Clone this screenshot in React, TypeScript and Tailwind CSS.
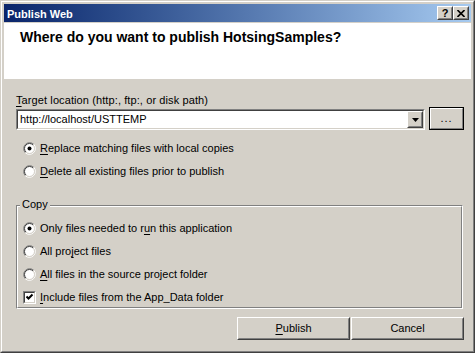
import type { ReactNode } from "react";

const raisedOuter =
  "border border-t-white border-l-white border-r-[#404040] border-b-[#404040]";
const raisedInner =
  "border border-t-[#d4d0c8] border-l-[#d4d0c8] border-r-[#808080] border-b-[#808080]";
const sunkenOuter =
  "border border-t-[#808080] border-l-[#808080] border-r-white border-b-white";
const sunkenInner =
  "border border-t-[#404040] border-l-[#404040] border-r-[#d4d0c8] border-b-[#d4d0c8]";

function Raised({
  children,
  className = "",
}: {
  children?: ReactNode;
  className?: string;
}) {
  return (
    <div className={`${raisedOuter} bg-[#d4d0c8] ${className}`}>
      <div
        className={`${raisedInner} h-full w-full flex items-center justify-center`}
      >
        {children}
      </div>
    </div>
  );
}

function Radio({ checked }: { checked?: boolean }) {
  return (
    <svg width="13" height="13" viewBox="0 0 13 13" className="shrink-0">
      <circle cx="6.5" cy="6.5" r="5" fill="white" />
      <path
        d="M2.26 10.74 A6 6 0 0 1 10.74 2.26"
        fill="none"
        stroke="#808080"
      />
      <path
        d="M10.74 2.26 A6 6 0 0 1 2.26 10.74"
        fill="none"
        stroke="white"
      />
      <path
        d="M2.96 10.04 A5 5 0 0 1 10.04 2.96"
        fill="none"
        stroke="#404040"
      />
      <path
        d="M10.04 2.96 A5 5 0 0 1 2.96 10.04"
        fill="none"
        stroke="#d4d0c8"
      />
      {checked && <circle cx="6.5" cy="6.5" r="2" fill="black" />}
    </svg>
  );
}

function Checkbox({ checked }: { checked?: boolean }) {
  return (
    <div className={`${sunkenOuter} w-[13px] h-[13px] shrink-0`}>
      <div className={`${sunkenInner} h-full w-full bg-white`}>
        {checked && (
          <svg width="9" height="9" viewBox="0 0 9 9">
            <path
              d="M1.5 3.5 L3.5 5.5 L7.5 1.5"
              fill="none"
              stroke="black"
              strokeWidth="2"
            />
          </svg>
        )}
      </div>
    </div>
  );
}

function Option({
  children,
  checked,
  box,
}: {
  children: ReactNode;
  checked?: boolean;
  box?: boolean;
}) {
  return (
    <div className="flex items-center gap-[4px] h-[13px]">
      {box ? <Checkbox checked={checked} /> : <Radio checked={checked} />}
      <span>{children}</span>
    </div>
  );
}

function Key({ children }: { children: ReactNode }) {
  return <u className="decoration-1 underline-offset-[2px]">{children}</u>;
}

export default function App() {
  return (
    <div className="w-[475px] h-[353px] border border-t-[#d4d0c8] border-l-[#d4d0c8] border-r-[#404040] border-b-[#404040] bg-[#d4d0c8] font-['Liberation_Sans',Arial,sans-serif] text-[11px] leading-[13px] text-black select-none">
      <div className="h-full border border-t-white border-l-white border-r-[#808080] border-b-[#808080] p-[2px] flex flex-col">
        {/* caption */}
        <div className="h-[18px] shrink-0 flex items-center justify-between bg-linear-to-r from-[#0a246a] to-[#a6caf0] pl-[3px] pr-[2px]">
          <span className="self-start mt-[4px] font-bold text-white">
            Publish Web
          </span>
          <div className="flex">
            <Raised className="w-[16px] h-[14px]">
              <span className="font-bold text-[11px] leading-[10px]">?</span>
            </Raised>
            <Raised className="w-[16px] h-[14px]">
              <svg width="8" height="7" viewBox="0 0 8 7">
                <path
                  d="M0.5 0 L7.5 7 M7.5 0 L0.5 7"
                  stroke="black"
                  strokeWidth="1.6"
                />
              </svg>
            </Raised>
          </div>
        </div>
        <div className="h-px shrink-0" />

        {/* header */}
        <div className="h-[56px] shrink-0 bg-white pl-4 pt-[6px]">
          <span className="text-[14px] leading-[17px] font-bold">
            Where do you want to publish HotsingSamples?
          </span>
        </div>

        <div className="flex flex-col pl-3 pr-[7px]">
          <div className="mt-[15px] tracking-[0.1px]">
            <Key>T</Key>arget location (http:, ftp:, or disk path)
          </div>

          <div className="flex gap-[4px] h-[23px]">
            <div className={`${sunkenOuter} w-[409px] h-[21px] mt-[2px]`}>
              <div className={`${sunkenInner} h-full w-full bg-white flex`}>
                <span className="flex-1 pl-[2px] self-center">
                  http://localhost/USTTEMP
                </span>
                <Raised className="w-[16px] h-full">
                  <svg width="7" height="4" viewBox="0 0 7 4">
                    <path d="M0 0 H7 L3.5 4 Z" fill="black" />
                  </svg>
                </Raised>
              </div>
            </div>
            <div className="w-[35px] h-[23px] border border-black">
              <div className="h-full w-full border border-t-white border-l-white border-r-[#808080] border-b-[#808080] flex items-center justify-center">
                <span className="tracking-[1px]">...</span>
              </div>
            </div>
          </div>

          <div className="mt-[12px] pl-[7px] flex flex-col gap-[10px]">
            <Option checked>
              <Key>R</Key>eplace matching files with local copies
            </Option>
            <Option>
              <Key>D</Key>elete all existing files prior to publish
            </Option>
          </div>

          {/* Copy group */}
          <div className="mt-[27px] relative w-[447px] border border-t-[#808080] border-l-[#808080] border-r-white border-b-white">
            <span className="absolute left-[3px] top-[-8px] px-[2px] bg-[#d4d0c8]">
              Copy
            </span>
            <div className="border border-t-white border-l-white border-r-[#808080] border-b-[#808080] pt-[15px] pb-[3px] pl-[5px] flex flex-col gap-[10px]">
              <Option checked>
                Only files needed to r<Key>u</Key>n this application
              </Option>
              <Option>
                All pro<Key>j</Key>ect files
              </Option>
              <Option>
                <Key>A</Key>ll files in the source project folder
              </Option>
              <Option box checked>
                <Key>I</Key>nclude files from the App_Data folder
              </Option>
            </div>
          </div>

          <div className="mt-[8px] flex justify-end gap-px">
            <Raised className="w-[113px] h-[23px]">
              <span>
                <Key>P</Key>ublish
              </span>
            </Raised>
            <Raised className="w-[113px] h-[23px]">
              <span>Cancel</span>
            </Raised>
          </div>
        </div>
      </div>
    </div>
  );
}
